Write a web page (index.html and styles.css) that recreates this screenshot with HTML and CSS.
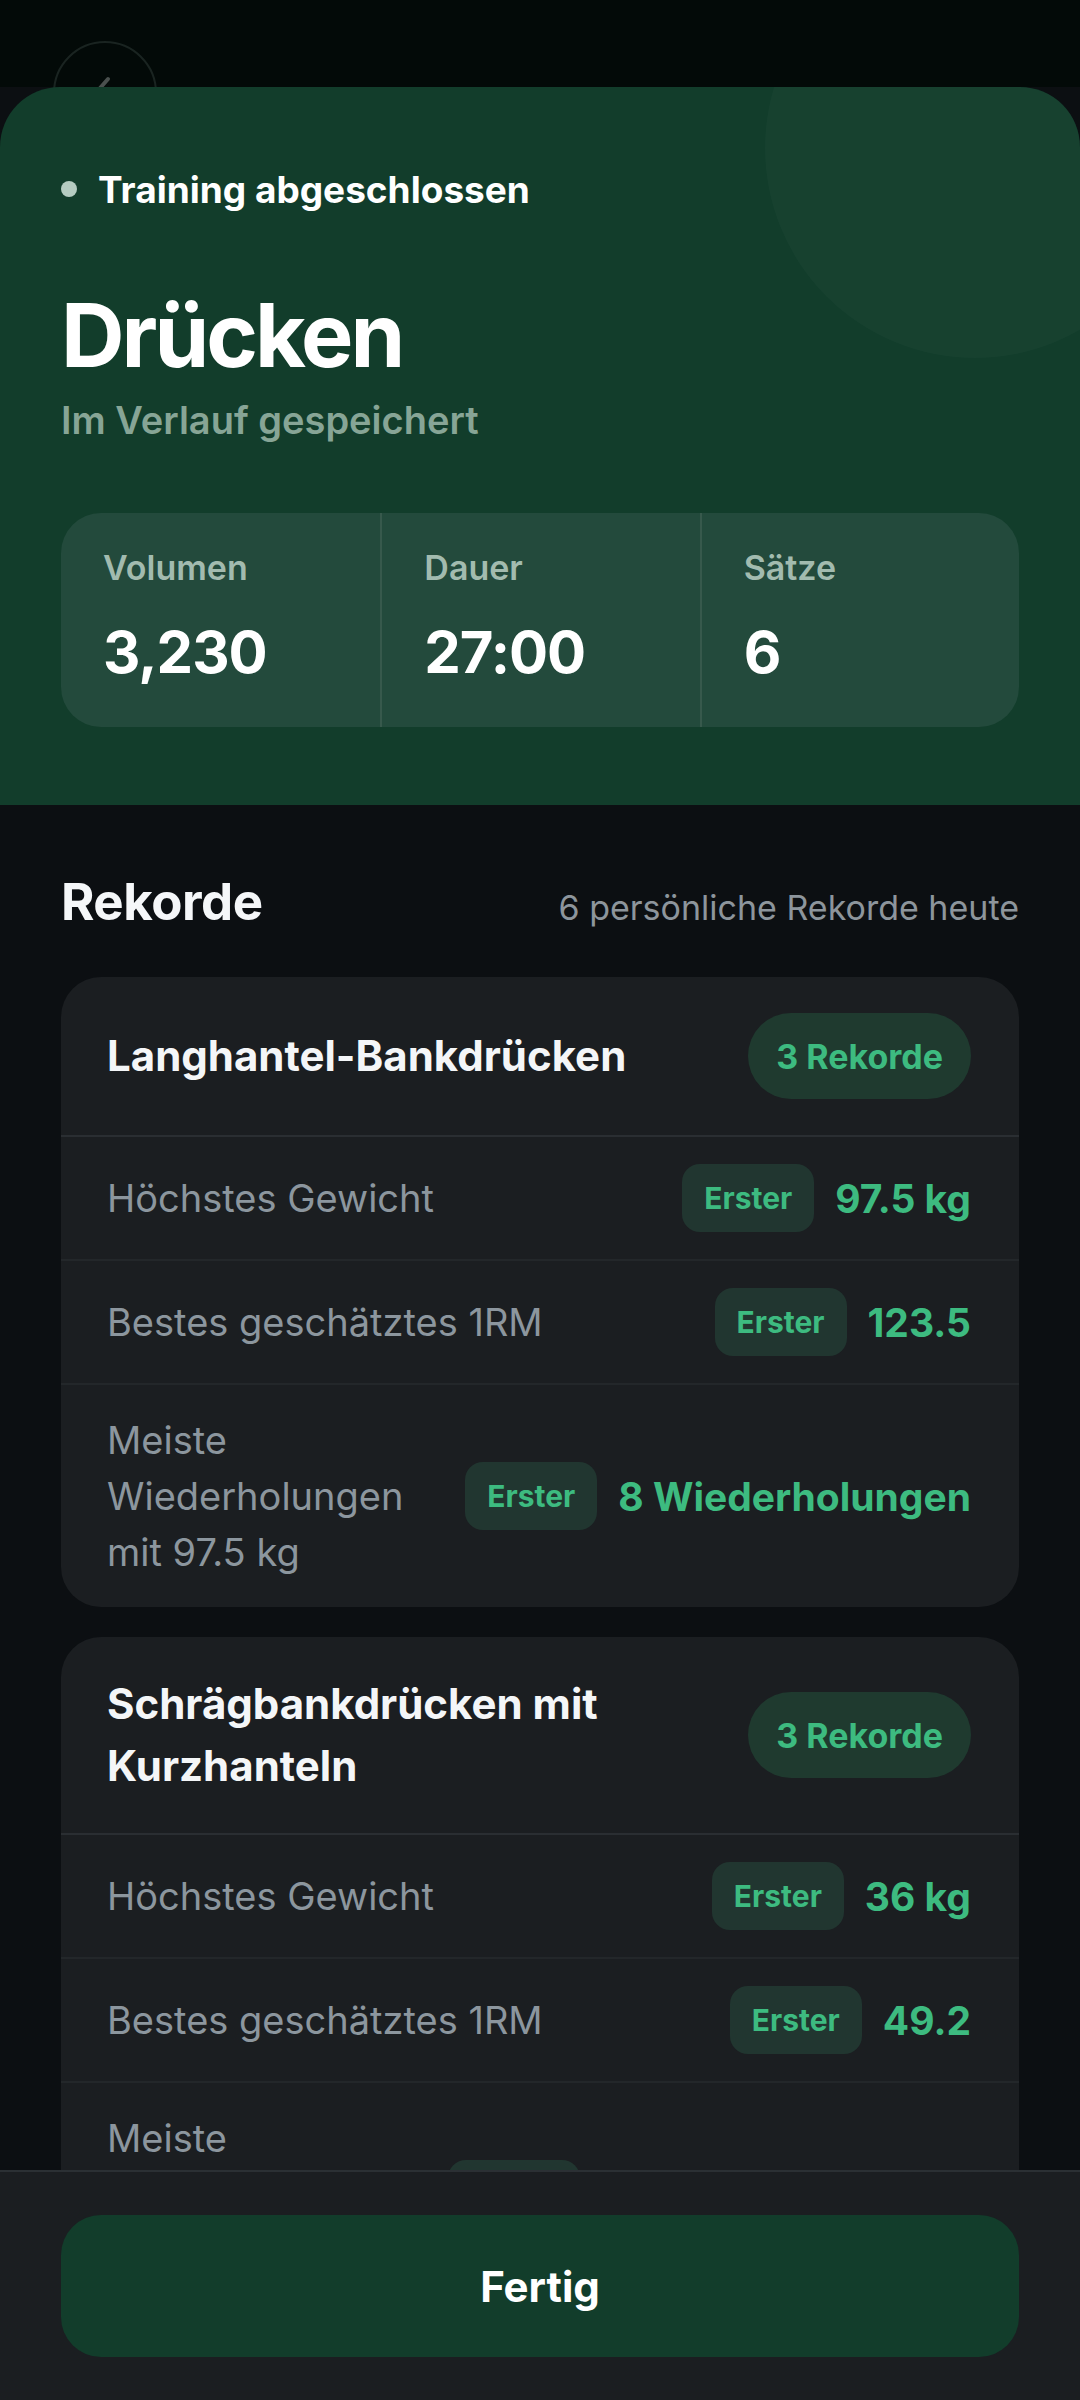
FILE: index.html
```html
<!DOCTYPE html>
<html lang="de">
<head>
<meta charset="utf-8">
<meta name="viewport" content="width=1080">
<title>Training abgeschlossen</title>
<link rel="stylesheet" href="styles.css">
</head>
<body>
<div class="topbar">
  <div class="back">
    <svg viewBox="0 0 100 100" width="100" height="100"><polyline points="53,36 39,52 53,68" fill="none" stroke="#4a504e" stroke-width="4" stroke-linecap="round" stroke-linejoin="round"/></svg>
  </div>
</div>
<section class="hero">
  <div class="hero-deco"></div>
  <div class="status"><span class="dot"></span><span>Training abgeschlossen</span></div>
  <h1 class="title">Drücken</h1>
  <p class="subtitle">Im Verlauf gespeichert</p>
  <div class="stats">
    <div class="stat"><div class="stat-label">Volumen</div><div class="stat-value">3,230</div></div>
    <div class="stat"><div class="stat-label">Dauer</div><div class="stat-value">27:00</div></div>
    <div class="stat"><div class="stat-label">Sätze</div><div class="stat-value">6</div></div>
  </div>
</section>
<main class="records">
  <div class="records-head">
    <h2 class="records-title">Rekorde</h2>
    <span class="records-count">6 persönliche Rekorde heute</span>
  </div>

  <div class="card">
    <div class="card-head">
      <div class="card-title">Langhantel-Bankdrücken</div>
      <div class="badge">3 Rekorde</div>
    </div>
    <div class="row">
      <div class="row-label">Höchstes Gewicht</div>
      <div class="row-right"><span class="chip">Erster</span><span class="row-value">97.5 kg</span></div>
    </div>
    <div class="row">
      <div class="row-label">Bestes geschätztes 1RM</div>
      <div class="row-right"><span class="chip">Erster</span><span class="row-value">123.5</span></div>
    </div>
    <div class="row">
      <div class="row-label">Meiste Wiederholungen mit 97.5 kg</div>
      <div class="row-right"><span class="chip">Erster</span><span class="row-value">8 Wiederholungen</span></div>
    </div>
  </div>

  <div class="card">
    <div class="card-head">
      <div class="card-title">Schrägbankdrücken mit Kurzhanteln</div>
      <div class="badge">3 Rekorde</div>
    </div>
    <div class="row">
      <div class="row-label">Höchstes Gewicht</div>
      <div class="row-right"><span class="chip">Erster</span><span class="row-value">36 kg</span></div>
    </div>
    <div class="row">
      <div class="row-label">Bestes geschätztes 1RM</div>
      <div class="row-right"><span class="chip">Erster</span><span class="row-value">49.2</span></div>
    </div>
    <div class="row">
      <div class="row-label">Meiste Wiederholungen mit 32 kg</div>
      <div class="row-right"><span class="chip">Erster</span><span class="row-value">10 Wiederholungen</span></div>
    </div>
  </div>
</main>
<footer class="bottombar">
  <button class="done" type="button">Fertig</button>
</footer>
</body>
</html>
```

FILE: styles.css
```css
* { box-sizing: border-box; }

html, body {
  margin: 0;
  padding: 0;
}

body {
  width: 1080px;
  background: #0c0f12;
  font-family: Inter, "Noto Sans", "Liberation Sans", sans-serif;
  color: #ffffff;
}

.topbar {
  height: 87px;
  background: #030a08;
  padding: 41px 0 0 53px;
}

.back {
  width: 104px;
  height: 104px;
  border: 2px solid #1a2421;
  border-radius: 50%;
  display: flex;
  align-items: center;
  justify-content: center;
}

.hero {
  position: relative;
  z-index: 1;
  overflow: hidden;
  background: #123d2b;
  border-radius: 60px 60px 0 0;
  padding: 80px 61px 78px;
}

.hero-deco {
  position: absolute;
  left: 765px;
  top: -149px;
  width: 420px;
  height: 420px;
  border-radius: 50%;
  background: rgba(255, 255, 255, 0.022);
}

.status {
  position: relative;
  display: flex;
  align-items: center;
  gap: 21px;
  height: 44px;
  font-size: 37px;
  font-weight: 700;
  color: #ffffff;
}

.dot {
  width: 16px;
  height: 16px;
  border-radius: 50%;
  background: #b5ccc1;
}

.title {
  position: relative;
  margin: 76px 0 0;
  font-size: 88px;
  line-height: 96px;
  font-weight: 700;
  letter-spacing: -3px;
  color: #ffffff;
}

.subtitle {
  position: relative;
  margin: 16px 0 0;
  font-size: 38px;
  line-height: 42px;
  font-weight: 600;
  color: #87a596;
}

.stats {
  position: relative;
  margin-top: 72px;
  display: grid;
  grid-template-columns: 1fr 1fr 1fr;
  background: #234a3c;
  border-radius: 40px;
  overflow: hidden;
}

.stat {
  padding: 35px 42px 43px;
}

.stat + .stat {
  border-left: 2px solid #37594c;
}

.stat-label {
  font-size: 34px;
  line-height: 40px;
  font-weight: 600;
  color: #a2bbaf;
}

.stat-value {
  margin-top: 32px;
  font-size: 58px;
  line-height: 64px;
  font-weight: 700;
  letter-spacing: -1px;
  color: #ffffff;
}

.records {
  padding: 67px 61px 260px;
}

.records-head {
  display: flex;
  justify-content: space-between;
  align-items: baseline;
  margin-bottom: 45px;
}

.records-title {
  margin: 0;
  font-size: 51px;
  line-height: 60px;
  font-weight: 700;
  letter-spacing: -0.5px;
  color: #f5f7f9;
}

.records-count {
  font-size: 34px;
  font-weight: 400;
  color: #8d959c;
}

.card {
  background: #1b1e21;
  border-radius: 40px;
  overflow: hidden;
}

.card + .card {
  margin-top: 30px;
}

.card-head {
  display: flex;
  align-items: center;
  justify-content: space-between;
  gap: 24px;
  padding: 36px 48px 36px 46px;
  border-bottom: 2px solid #2a2e32;
}

.card-title {
  font-size: 42px;
  line-height: 62px;
  font-weight: 700;
  color: #f4f6f8;
}

.badge {
  flex-shrink: 0;
  height: 86px;
  padding: 0 28px;
  border-radius: 43px;
  background: #1f3a2f;
  color: #3dbb80;
  font-size: 34px;
  font-weight: 700;
  display: flex;
  align-items: center;
}

.row {
  display: flex;
  align-items: center;
  justify-content: space-between;
  gap: 24px;
  padding: 27px 48px 27px 46px;
}

.row + .row {
  border-top: 2px solid #23272a;
}

.row-label {
  flex: 1;
  min-width: 0;
  font-size: 38px;
  line-height: 56px;
  font-weight: 400;
  color: #8c969e;
}

.row-right {
  flex-shrink: 0;
  display: flex;
  align-items: center;
  gap: 21px;
}

.chip {
  height: 68px;
  padding: 0 22px;
  border-radius: 18px;
  background: #213630;
  color: #3dbb80;
  font-size: 30px;
  font-weight: 700;
  display: flex;
  align-items: center;
}

.row-value {
  font-size: 39px;
  font-weight: 700;
  color: #3dbb80;
}

.bottombar {
  position: fixed;
  left: 0;
  right: 0;
  bottom: 0;
  z-index: 5;
  background: #1b1e21;
  border-top: 2px solid #2b3034;
  padding: 43px 61px;
}

.done {
  display: block;
  width: 100%;
  height: 142px;
  border: 0;
  border-radius: 40px;
  background: #123d2b;
  color: #ffffff;
  font-family: Inter, "Noto Sans", "Liberation Sans", sans-serif;
  font-size: 42px;
  font-weight: 700;
}
```
